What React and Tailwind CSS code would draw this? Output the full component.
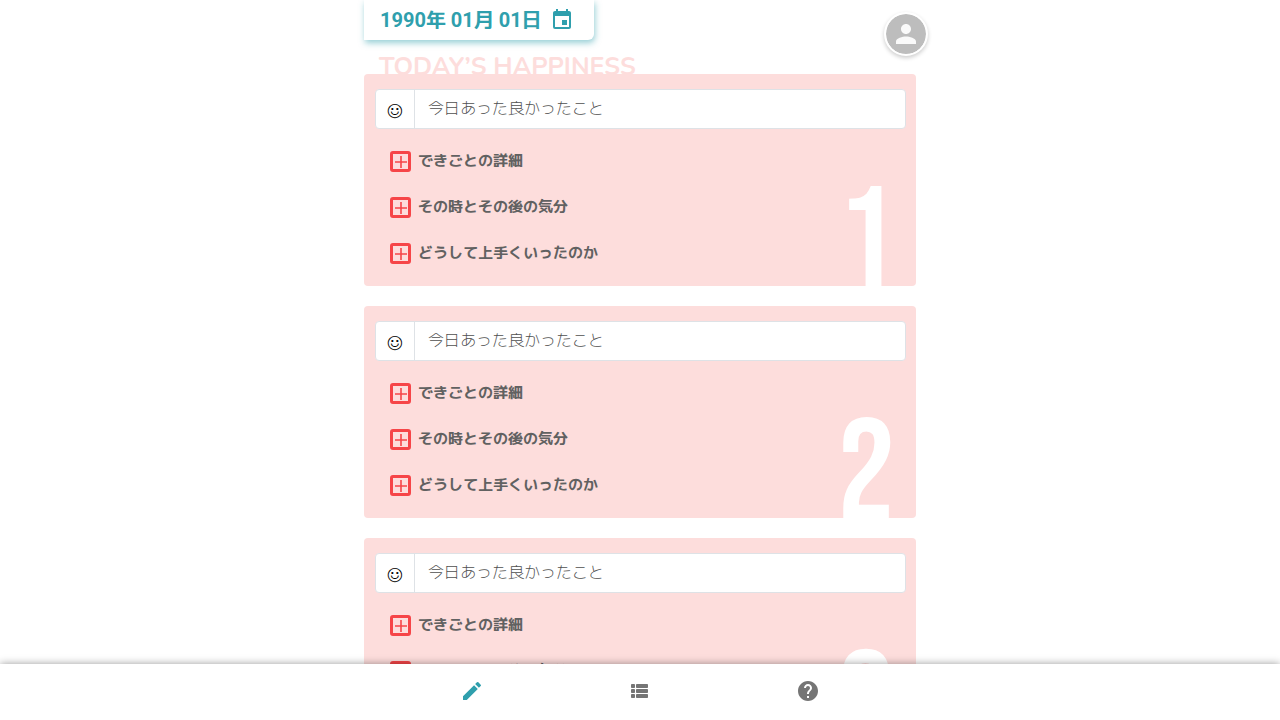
import React from "react";
import { MdEvent, MdPerson, MdEdit, MdHelp } from "react-icons/md";

const DETAILS = ["できごとの詳細", "その時とその後の気分", "どうして上手くいったのか"];

function PlusBox() {
  return (
    <svg viewBox="0 0 21 21" className="size-[21px] shrink-0" aria-hidden="true">
      <rect x="1.5" y="1.5" width="18" height="18" rx="1.5" fill="none" stroke="#f64548" strokeWidth="3" />
      <path d="M5 11h12M11 5v12" stroke="#f64548" strokeWidth="1.6" fill="none" />
    </svg>
  );
}

function ListIcon() {
  return (
    <svg viewBox="0 0 24 24" className="size-6" fill="currentColor" aria-hidden="true">
      <rect x="3" y="5" width="4" height="4" rx="0.8" />
      <rect x="3" y="10" width="4" height="4" rx="0.8" />
      <rect x="3" y="15" width="4" height="4" rx="0.8" />
      <rect x="8" y="5" width="12" height="4" rx="0.8" />
      <rect x="8" y="10" width="12" height="4" rx="0.8" />
      <rect x="8" y="15" width="12" height="4" rx="0.8" />
    </svg>
  );
}

function HappinessCard({ number }) {
  const id = `happiness-${number}`;
  return (
    <section className="relative overflow-hidden rounded bg-[#fddddc] pr-[10px] pb-[10px] pl-[11px] pt-[15px]">
      <div className="flex h-10 overflow-hidden rounded border border-[#dee2e6] bg-white">
        <label
          htmlFor={id}
          className="flex w-[39px] shrink-0 items-center justify-center border-r border-[#dee2e6] pt-1.5 text-[19px] leading-6 text-black"
        >
          ☺
        </label>
        <input
          id={id}
          type="text"
          placeholder="今日あった良かったこと"
          className="min-w-0 flex-1 px-[13px] text-base font-light text-[#495057] outline-none placeholder:text-[#505050] placeholder:opacity-100"
        />
      </div>
      <ul className="mt-[9px] px-[15px]">
        {DETAILS.map((label) => (
          <li key={label} className="flex h-[46px] items-center">
            <button type="button" className="flex items-center gap-[7px] text-[15px] leading-6 font-bold text-[#616161]">
              <PlusBox />
              {label}
            </button>
          </li>
        ))}
      </ul>
      <span className="pointer-events-none absolute top-[90px] right-[21px] font-['Bebas_Neue','Roboto_Condensed','Liberation_Sans_Narrow',sans-serif] text-[143px] leading-[160px] text-white">
        {number}
      </span>
    </section>
  );
}

export default function App() {
  return (
    <div className="h-screen overflow-hidden bg-white font-['Roboto','M_PLUS_1p','Noto_Sans_CJK_JP',sans-serif]" lang="ja">
      <div className="mx-auto w-full max-w-[552px]">
        <header className="flex h-[54px] items-start justify-between">
          <button
            type="button"
            className="flex h-10 items-center gap-2 rounded-br-md bg-white pr-5 pl-4 text-xl font-bold text-[#2f9fad] shadow-[1px_3px_6px_#2f9fad80]"
          >
            1990年 01月 01日
            <MdEvent className="size-6" />
          </button>
          <button
            type="button"
            aria-label="アカウント"
            className="mt-3 -mr-3 flex size-11 items-center justify-center rounded-full border-2 border-white bg-[#bdbdbd] bg-clip-padding text-[#fafafa] shadow-[0_2px_4px_#00000033]"
          >
            <MdPerson className="size-[30px]" />
          </button>
        </header>
        <h1 className="h-5 pl-[15px] font-['Nunito','Lato',sans-serif] text-[25px] leading-[26px] font-bold text-[#fddddc]">
          TODAY’S HAPPINESS
        </h1>
        <main className="flex flex-col gap-5">
          <HappinessCard number={1} />
          <HappinessCard number={2} />
          <HappinessCard number={3} />
        </main>
      </div>
      <nav className="fixed inset-x-0 bottom-0 flex h-14 justify-center bg-white pb-[2px] text-[#757575] shadow-[0_0_8px_#00000066]">
        <button type="button" aria-label="書く" className="flex w-[168px] items-center justify-center text-[#2f9fad]">
          <MdEdit className="size-6" />
        </button>
        <button type="button" aria-label="一覧" className="flex w-[168px] items-center justify-center">
          <ListIcon />
        </button>
        <button type="button" aria-label="ヘルプ" className="flex w-[168px] items-center justify-center">
          <MdHelp className="size-6" />
        </button>
      </nav>
    </div>
  );
}
